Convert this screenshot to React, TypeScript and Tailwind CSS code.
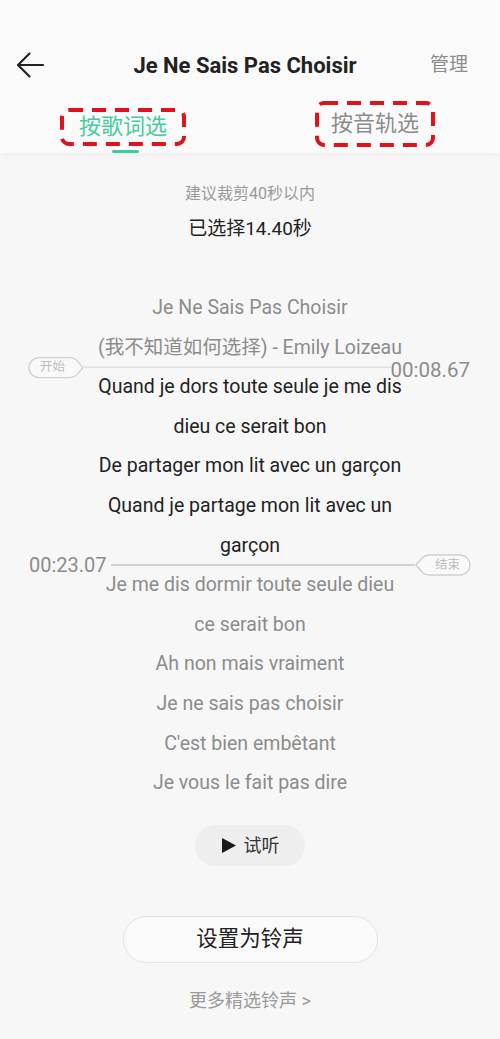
import React from "react";

const font = "font-['Roboto','Noto_Sans_CJK_SC',sans-serif]";

type Line = { text: string; tone: "dim" | "on" };

const lyricsTop: Line[] = [
  { text: "Je Ne Sais Pas Choisir", tone: "dim" },
  { text: "(我不知道如何选择) - Emily Loizeau", tone: "dim" },
];

const lyricsMid: Line[] = [
  { text: "Quand je dors toute seule je me dis", tone: "on" },
  { text: "dieu ce serait bon", tone: "on" },
  { text: "De partager mon lit avec un garçon", tone: "on" },
  { text: "Quand je partage mon lit avec un", tone: "on" },
  { text: "garçon", tone: "on" },
];

const lyricsEnd: Line[] = [
  { text: "Je me dis dormir toute seule dieu", tone: "dim" },
  { text: "ce serait bon", tone: "dim" },
  { text: "Ah non mais vraiment", tone: "dim" },
  { text: "Je ne sais pas choisir", tone: "dim" },
  { text: "C'est bien embêtant", tone: "dim" },
  { text: "Je vous le fait pas dire", tone: "dim" },
];

const LyricLine = ({ line }: { line: Line }) => (
  <p
    className={`h-[39.6px] leading-[39.6px] text-[19.5px] text-center whitespace-nowrap ${
      line.tone === "on" ? "text-[#222222]" : "text-[#8c8c8c]"
    }`}
  >
    {line.text}
  </p>
);

// pill tag with a pointed side, e.g. 开始 / 结束
const Tag = ({ label, point }: { label: string; point: "left" | "right" }) => (
  <div className="relative w-[56px] h-[22px] shrink-0">
    <svg width="56" height="22" viewBox="0 0 56 22" className="absolute inset-0">
      {point === "right" ? (
        <path
          d="M11 1 H42 Q46 1 49 4 L55 11 L49 18 Q46 21 42 21 H11 A10 10 0 0 1 11 1 Z"
          fill="#f9f9f9"
          stroke="#cfcfcf"
          strokeWidth="1.3"
        />
      ) : (
        <path
          d="M45 1 H14 Q10 1 7 4 L1 11 L7 18 Q10 21 14 21 H45 A10 10 0 0 0 45 1 Z"
          fill="#f9f9f9"
          stroke="#cfcfcf"
          strokeWidth="1.3"
        />
      )}
    </svg>
    <span
      className={`absolute inset-y-0 flex items-center text-[12.5px] text-[#bdbdbd] ${
        point === "right" ? "left-[12px]" : "right-[11px]"
      }`}
    >
      {label}
    </span>
  </div>
);

// red dashed annotation frame
const DashFrame = ({ w, h, children }: { w: number; h: number; children: React.ReactNode }) => (
  <div className="relative flex items-center justify-center" style={{ width: w, height: h }}>
    <svg width={w} height={h} className="absolute inset-0">
      <rect
        x="2"
        y="2"
        width={w - 4}
        height={h - 4}
        rx="7"
        fill="none"
        stroke="#e0121b"
        strokeWidth="4"
        strokeDasharray="14 9"
      />
    </svg>
    {children}
  </div>
);

const App = () => {
  return (
    <div className={`w-[500px] h-[1039px] bg-[#f7f7f7] overflow-hidden ${font}`}>
      {/* header */}
      <div className="h-[153px] bg-[#fafafa] shadow-[0_2px_6px_rgba(0,0,0,0.04)] relative z-10">
        <div className="h-[40px]" />
        <div className="h-[50px] flex items-center pl-[15px] pr-[32px]">
          <svg width="30" height="28" viewBox="0 0 30 28" fill="none">
            <path d="M28 14 H3.5" stroke="#222" strokeWidth="2.2" strokeLinecap="round" />
            <path d="M14.5 2.5 L3 14 L14.5 25.5" stroke="#222" strokeWidth="2.2" strokeLinecap="round" strokeLinejoin="round" />
          </svg>
          <div className="flex-1 flex justify-center">
            <h1 className="ml-[15px] text-[22px] font-bold text-[#222222]">Je Ne Sais Pas Choisir</h1>
          </div>
          <span className="text-[19px] text-[#8c8c8c]">管理</span>
        </div>
        <div className="grid grid-cols-2">
          <div className="flex flex-col items-center">
            <div className="mt-[18px] -ml-[4px]">
              <DashFrame w={126} h={38}>
                <span className="text-[22px] text-[#45cc9f] leading-none">按歌词选</span>
              </DashFrame>
            </div>
            <div className="mt-[4px] w-[27px] h-[3px] bg-[#3ccb9a] rounded-full" />
          </div>
          <div className="flex justify-center">
            <div className="mt-[11px]">
              <DashFrame w={120} h={46}>
                <span className="text-[22px] text-[#8c8c8c] leading-none">按音轨选</span>
              </DashFrame>
            </div>
          </div>
        </div>
      </div>

      {/* body */}
      <div className="flex flex-col items-center">
        <p className="mt-[29px] text-[16px] leading-[24px] text-[#9a9a9a]">建议裁剪40秒以内</p>
        <p className="mt-[9px] text-[19px] leading-[28px] text-[#222222]">已选择14.40秒</p>

        <div className="mt-[45px] w-full">
          {lyricsTop.map((l) => (
            <LyricLine key={l.text} line={l} />
          ))}
          <div className="relative h-0">
            <div className="absolute left-0 right-0 top-0 -translate-y-1/2 flex items-center pl-[28px] pr-[30px]">
              <Tag label="开始" point="right" />
              <div className="flex-1 h-[1.5px] bg-[#d2d2d2]" />
              <span className="text-[20.5px] text-[#8c8c8c] translate-y-[3px]">00:08.67</span>
            </div>
          </div>
          {lyricsMid.map((l) => (
            <LyricLine key={l.text} line={l} />
          ))}
          <div className="relative h-0">
            <div className="absolute left-0 right-0 top-0 -translate-y-1/2 flex items-center pl-[29px] pr-[29px]">
              <span className="text-[20px] text-[#8c8c8c] mr-[4px]">00:23.07</span>
              <div className="flex-1 h-[1.5px] bg-[#d2d2d2]" />
              <Tag label="结束" point="left" />
            </div>
          </div>
          {lyricsEnd.map((l) => (
            <LyricLine key={l.text} line={l} />
          ))}
        </div>

        <button className="mt-[22px] w-[110px] h-[41px] rounded-full bg-[#eeeeee] flex items-center justify-center gap-[7px]">
          <svg width="16" height="17" viewBox="0 0 16 17">
            <path d="M1 1 L15 8.5 L1 16 Z" fill="#1a1a1a" />
          </svg>
          <span className="text-[18px] text-[#333333]">试听</span>
        </button>

        <button className="mt-[50px] w-[255px] h-[47px] rounded-full border border-[#e3e3e3] bg-[#fafafa] flex items-center justify-center">
          <span className="text-[21.5px] text-[#222222]">设置为铃声</span>
        </button>

        <p className="mt-[26px] text-[18px] leading-[24px] text-[#9a9a9a]">更多精选铃声 &gt;</p>
      </div>
    </div>
  );
};

export default App;
